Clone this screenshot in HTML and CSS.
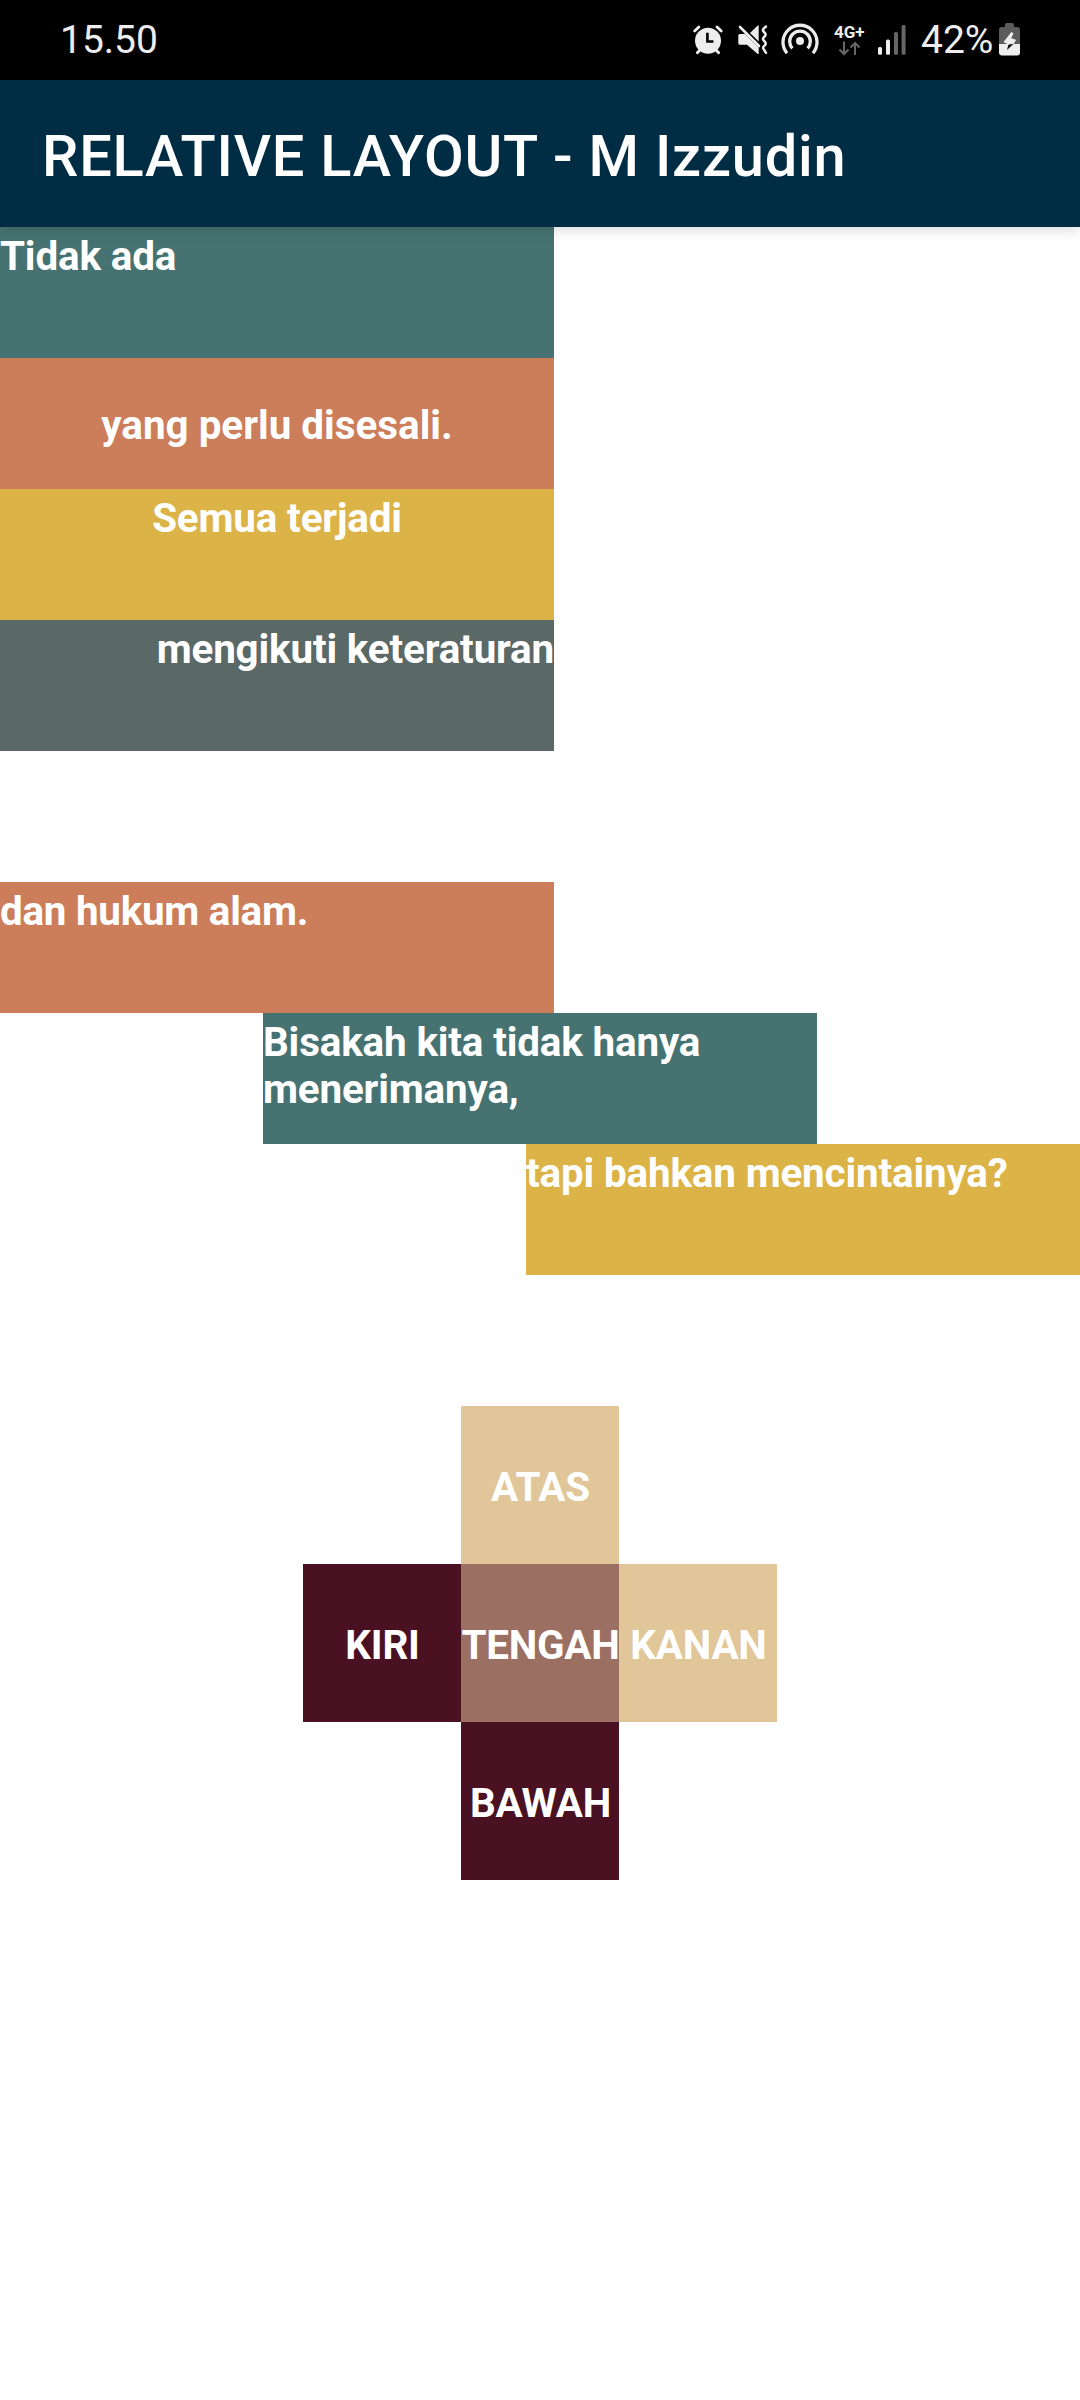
FILE: index.html
```html
<!DOCTYPE html>
<html lang="id">
<head>
<meta charset="utf-8">
<title>Relative Layout</title>
<link rel="stylesheet" href="styles.css">
</head>
<body>
<header class="status-bar">
  <span class="clock">15.50</span>
  <div class="status-icons">
    <svg class="alarm" width="30" height="30" viewBox="0 0 30 30">
      <g stroke="#ededed" stroke-width="2.8" stroke-linecap="round">
        <path d="M1.7 6 5.800 1.900M24 1.900l4.200 4.100M4.400 27.800l3-3.400M25.600 27.800l-3-3.400"/>
      </g>
      <circle cx="15" cy="15.7" r="13" fill="#ededed"/>
      <path d="M14.400 7.800v8.700h6.100" fill="none" stroke="#000" stroke-width="2.6"/>
    </svg>
    <svg class="mute" width="30" height="30" viewBox="0 0 30 30">
      <path d="M.3 10.5q0-1.5 1.5-1.5H7l13.7 13.6V29h-1L9 19.8H1.8q-1.5 0-1.5-1.5zM12 8.1 19.7.6h1v15.8z" fill="#ededed"/>
      <path d="m2 2 19 19" stroke="#ededed" stroke-width="2.6" stroke-linecap="round"/>
      <path d="M28 1.6q-4 2.8-2.8 4.5l1.8 2q1.5 2-1 4-1.7 1.6-.4 3.2l1.6 1.8q1.4 2-1 3.8-2 1.7-.4 3.4l2.2 3.5" fill="none" stroke="#ededed" stroke-width="2.5" stroke-linecap="round" stroke-linejoin="round"/>
    </svg>
    <svg class="hotspot" width="38" height="34" viewBox="0 0 38 34">
      <circle cx="19" cy="19" r="4" fill="#ededed"/>
      <path d="M6 31.2a17 17 0 1 1 26 0M11.4 26.4a10.3 10.3 0 1 1 15.2 0" fill="none" stroke="#ededed" stroke-width="3.3"/>
    </svg>
    <div class="network">
      <span>4G+</span>
      <svg width="24" height="15" viewBox="0 0 24 15">
        <path d="M6 .5v12M1.5 8.5 6 13l4.5-4.5M17 14V2M12.5 6.5 17 2l4.5 4.5" fill="none" stroke="#666" stroke-width="2"/>
      </svg>
    </div>
    <svg class="signal" width="28" height="30" viewBox="0 0 28 30">
      <g fill="#ededed"><rect y="22" width="4" height="7.7" rx="1.5"/><rect x="8" y="14.5" width="4" height="15.2" rx="1.5"/></g>
      <g fill="#666"><rect x="16" y="7" width="4" height="22.7" rx="1.5"/><rect x="23.6" width="4" height="29.7" rx="1.5"/></g>
    </svg>
    <span class="percent">42%</span>
    <svg class="battery" width="21" height="33" viewBox="0 0 21 33">
      <path d="M6 4V2q0-2 2-2h5q2 0 2 2v2h3q3 0 3 3v14H0V7q0-3 3-3z" fill="#5c5c5c"/>
      <path d="M0 21h21v8.500q0 3-3 3H3q-3 0-3-3z" fill="#ededed"/>
      <path d="M9.500 21h5L8 27z" fill="#111"/>
      <path d="M12.500 9.500 5 19l5 2h-1l5.500-.5 2-3.500-5-1.500 2.500-5z" fill="#ededed" stroke="#ededed" stroke-linejoin="round"/>
    </svg>
  </div>
</header>
<h1 class="app-bar">RELATIVE LAYOUT - M Izzudin</h1>
<main>
  <section class="stack">
    <p class="box teal">Tidak ada</p>
    <p class="box orange middle">yang perlu disesali.</p>
    <p class="box yellow center">Semua terjadi</p>
    <p class="box gray right">mengikuti keteraturan</p>
  </section>
  <section class="stairs">
    <p class="box orange step-left">dan hukum alam.</p>
    <p class="box teal step-center">Bisakah kita tidak hanya menerimanya,</p>
    <p class="box yellow step-right">tapi bahkan mencintainya?</p>
  </section>
  <section class="cross">
    <p class="tile sand top">ATAS</p>
    <p class="tile wine left">KIRI</p>
    <p class="tile blend">TENGAH</p>
    <p class="tile sand">KANAN</p>
    <p class="tile wine bottom">BAWAH</p>
  </section>
</main>
</body>
</html>
```
FILE: styles.css
```css
* { box-sizing: border-box; }
body {
  margin: 0;
  min-height: 2400px;
  background: #fff;
  color: #fff;
  font-family: Roboto, sans-serif;
}
p, h1 { margin: 0; }
svg { display: block; flex: none; }

.status-bar {
  display: flex;
  justify-content: space-between;
  height: 80px;
  padding: 0 60px;
  background: #000;
  color: #ededed;
  font-size: 39px;
  line-height: 80px;
}
.status-icons { display: flex; align-items: flex-start; }
.alarm { margin: 25px 15px 0 0; }
.mute { margin: 25px 13px 0 0; }
.hotspot { margin: 22px 15px 0 0; }
.network { width: 32px; margin: 25px 12px 0 0; }
.network span {
  display: block;
  height: 16px;
  font-size: 17px;
  font-weight: 700;
  line-height: 15px;
}
.network svg { margin-left: 4px; }
.signal { margin: 25px 15px 0 0; }
.percent { width: 78px; white-space: nowrap; }
.battery { margin-top: 23px; }

.app-bar {
  position: relative;
  height: 147px;
  padding-left: 42px;
  background: #002c44;
  font-size: 57.75px;
  font-weight: 500;
  letter-spacing: .79px;
  line-height: 152px;
  box-shadow: 0 3px 12px rgba(0, 0, 0, .15);
}

.stack, .stairs { display: flex; flex-direction: column; margin-bottom: 131px; }
.box {
  width: 554px;
  height: 131px;
  padding-top: 6px;
  font-size: 40.4px;
  font-weight: 700;
  letter-spacing: -.16px;
  line-height: 47px;
}
.middle { padding-top: 44px; letter-spacing: 0; text-align: center; }
.center { text-align: center; }
.right { text-align: right; }
.step-left { letter-spacing: -.27px; }
.step-center { align-self: center; }
.step-right { align-self: flex-end; }

.teal { background: #467372; }
.orange { background: #cc7d59; }
.yellow { background: #dcb347; }
.gray { background: #5a6866; }
.sand { background: #e0c698; }
.wine { background: #491121; }
.blend { background: #9b6f62; }

.cross {
  display: grid;
  grid-template: repeat(3, 158px) / repeat(3, 158px);
  justify-content: center;
}
.tile {
  display: flex;
  align-items: center;
  justify-content: center;
  padding: 4px 0 0 1px;
  font-size: 40.4px;
  font-weight: 700;
  letter-spacing: -.2px;
  line-height: 47px;
}
.top { grid-column: 2; }
.left { grid-column: 1; }
.bottom { grid-column: 2; }
```
